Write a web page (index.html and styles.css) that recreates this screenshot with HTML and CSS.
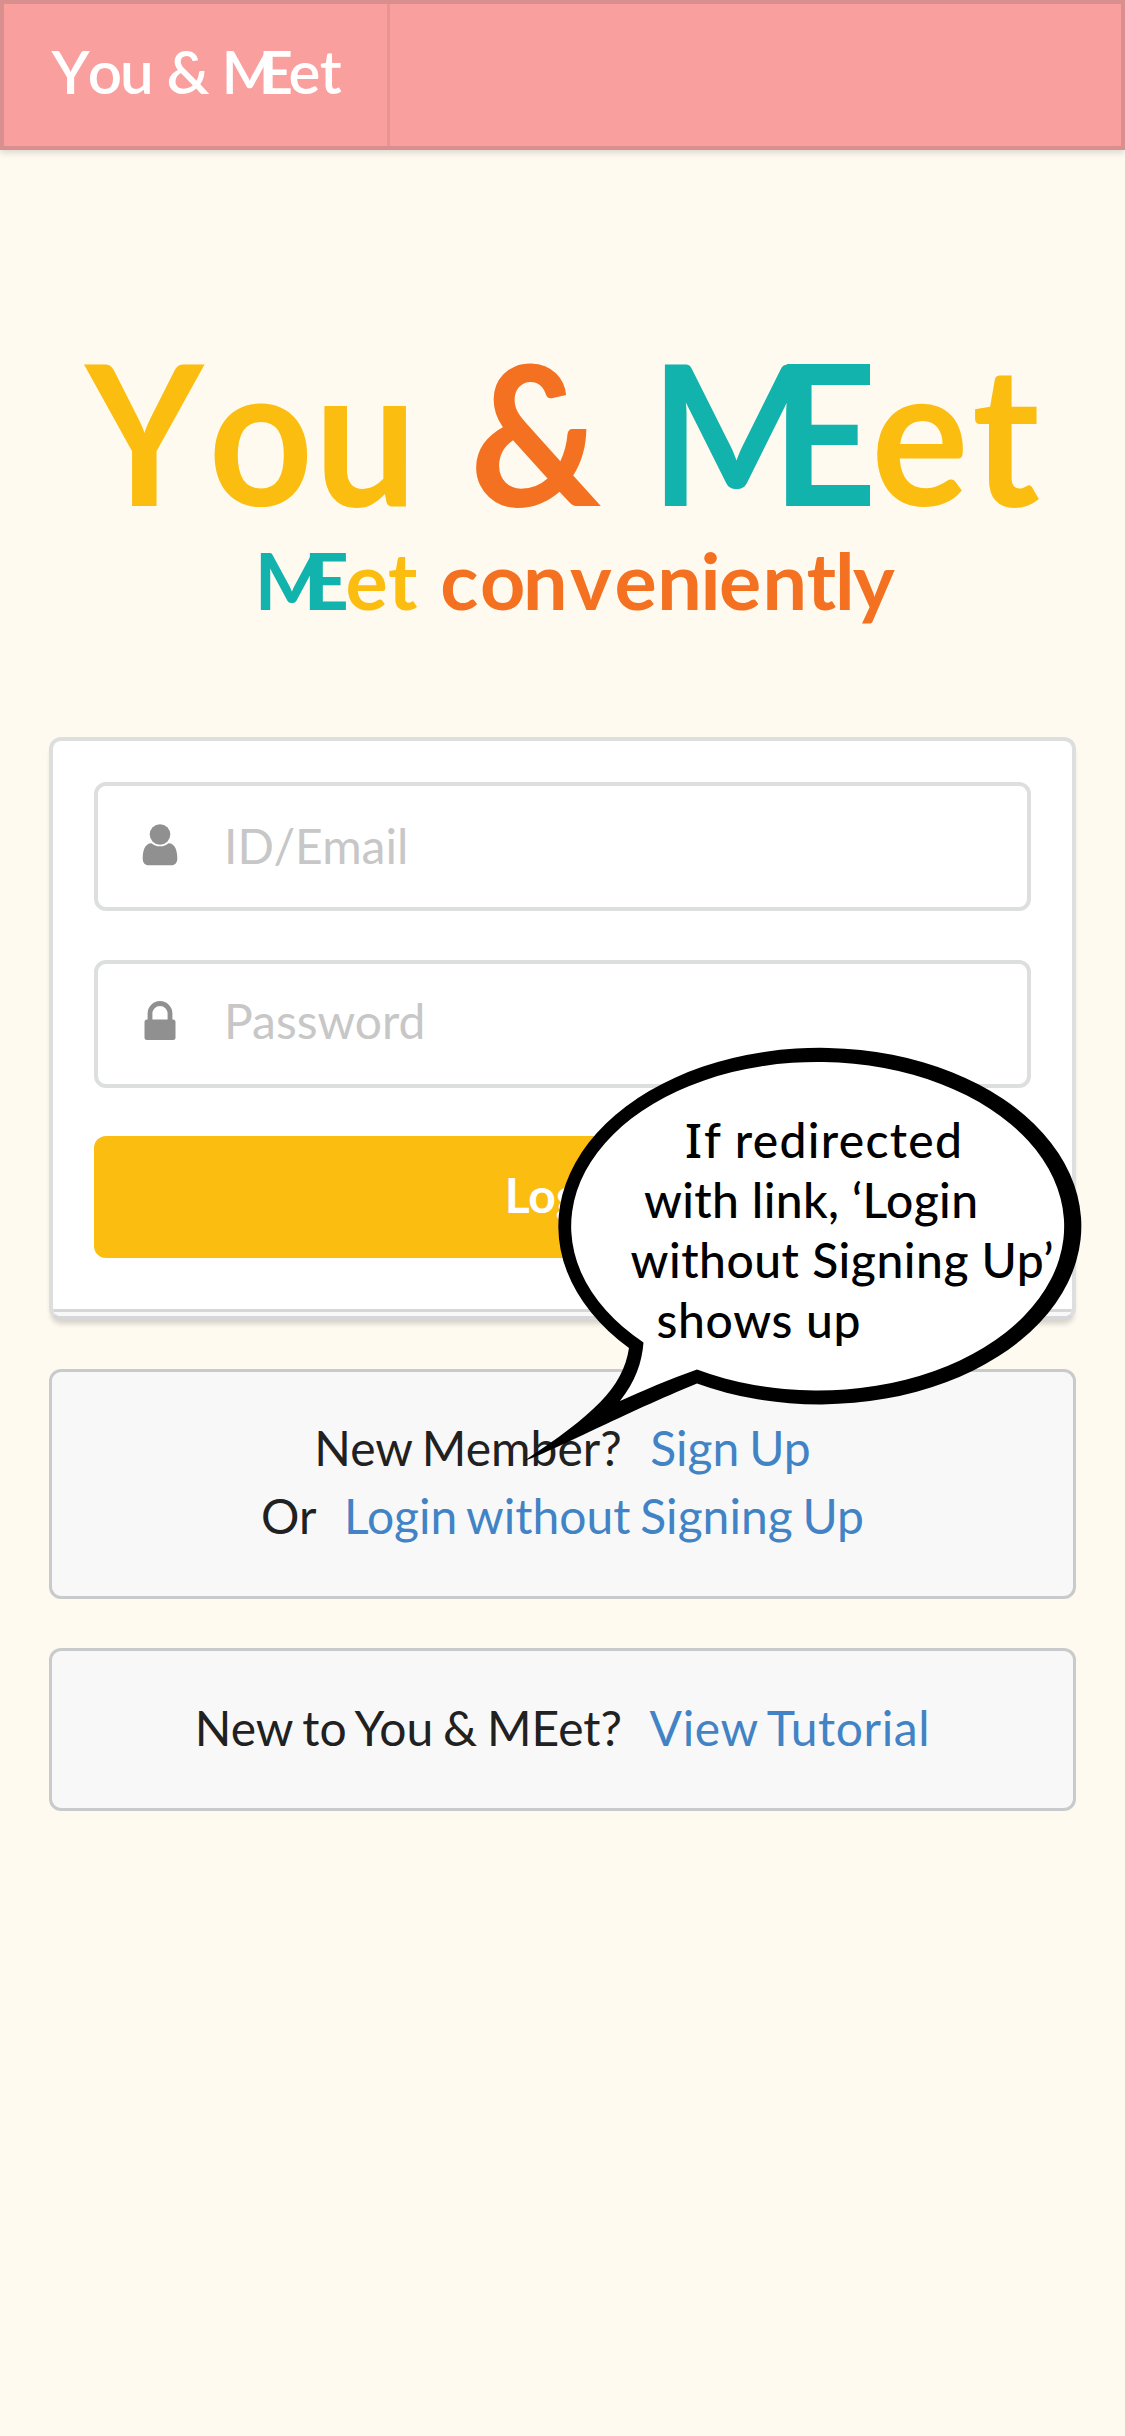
FILE: index.html
```
<!DOCTYPE html>
<html lang="en">
<head>
<meta charset="utf-8">
<title>You &amp; MEet</title>
<link rel="stylesheet" href="styles.css">
</head>
<body>
<header class="menu">
  <a class="menu-brand">
    <svg width="383" height="142" viewBox="4 4 383 142">
      <text class="brand" y="94" x="51.4 87.7 119.9 140 166.5 190 221.5 258.5 288.6 319.7">You &amp; MEet</text>
    </svg>
  </a>
</header>
<main class="page">
  <svg class="logo" width="1125" height="420" viewBox="0 260 1125 420">
    <text class="logo-name" transform="scale(.93 1)" y="506" x="91.8 224.1 338 440 504.9 640 699.2 830.4 936.8 1045.1"><tspan class="yellow">You </tspan><tspan class="orange">&amp; </tspan><tspan class="teal">ME</tspan><tspan class="yellow">et</tspan></text>
    <text class="logo-tag" y="610" x="254.5 303.5 345.4 388 425 440.2 480 523 570 614.5 657.3 700.4 719 762.5 806.7 835 853"><tspan class="teal">ME</tspan><tspan class="yellow">et </tspan><tspan class="orange">conveniently</tspan></text>
  </svg>

  <form class="card">
    <label class="field">
      <svg class="icon" width="36" height="42" viewBox="0 0 36 42"><circle cx="18" cy="10.500" r="10.300"/><path d="M9.500 19.200C2.500 19.200.7 27.500.7 34.500.7 38.600 3 41.300 6.500 41.300H29.500C33 41.300 35.300 38.600 35.300 34.500 35.300 27.500 33.500 19.200 26.500 19.200 24.500 21.200 21.500 22.300 18 22.300S11.500 21.200 9.500 19.200Z"/></svg>
      <input type="text" placeholder="ID/Email">
    </label>
    <label class="field field-password">
      <svg class="icon" width="36" height="42" viewBox="0 0 36 42"><path d="M8 21V13.500a10 10 0 0 1 20 0V21" fill="none" class="shackle"/><rect x="2.500" y="19.500" width="31" height="20.500" rx="2.500"/></svg>
      <input type="password" placeholder="Password">
    </label>
    <button class="submit" type="button">Login</button>
    <div class="card-foot"></div>
  </form>

  <section class="message message-join">
    <p>New Member? &nbsp;<a>Sign Up</a></p>
    <p>Or &nbsp;<a>Login without Signing Up</a></p>
  </section>
  <section class="message message-tutorial">
    <p>New to You &amp; MEet? &nbsp;<a>View Tutorial</a></p>
  </section>

  <svg class="bubble" width="570" height="430" viewBox="520 1040 570 430">
    <path d="M522 1460C549 1451 625 1411 695 1382.500A261.500 178.300 0 1 0 627 1347C621 1387 591 1414 522 1460Z"/>
    <path class="bubble-fill" d="M618 1400C633 1381 640 1362 641.500 1341.500A246.500 164.300 0 1 1 695 1368.500C668 1378 640 1390 618 1400Z"/>
    <g class="bubble-text">
      <text class="serif-i" x="683" y="1156.500">I</text>
      <text x="702" y="1156.500" textLength="258">f redirected</text>
      <text x="642" y="1216.500" textLength="334">with link, ‘Login</text>
      <text x="628.500" y="1276.500" textLength="423">without Signing Up’</text>
      <text x="654.500" y="1336.500" textLength="204">shows up</text>
    </g>
  </svg>
</main>
</body>
</html>
```
FILE: styles.css
```
* { box-sizing: border-box; }

body {
  margin: 0;
  min-height: 2436px;
  background: #fffaef;
  color: #212121;
  font-family: Lato, sans-serif;
  font-size: 48px;
}

.menu {
  display: flex;
  height: 150px;
  border: 4px solid #d98f8e;
  background: #f99f9d;
  box-shadow: 0 3px 6px rgba(34, 36, 38, .15);
}
.menu-brand {
  display: flex;
  border-right: 3px solid #e79594;
  width: 386px;
}
.menu-brand svg, .logo { display: block; flex: none; }
.brand { font-size: 60px; font-weight: 600; fill: #fff; }

.page { padding-top: 110px; }
.logo-name { font-size: 196px; font-weight: 700; }
.logo-tag { font-size: 79px; font-weight: 700; }
.yellow { fill: #fbbd10; }
.orange { fill: #f37121; }
.teal { fill: #12b3ad; }

.card {
  width: 1027px;
  height: 583px;
  margin: 57px auto 0 49px;
  display: flex;
  flex-direction: column;
  border: 4px solid #dddfde;
  border-bottom-color: #d6d7d8;
  border-radius: 12px;
  padding: 41px 41px 0;
  background: #fff;
  box-shadow: 0 6px 5px -2px rgba(34, 36, 38, .18);
}
.field {
  display: flex;
  align-items: center;
  height: 129px;
  border: 4px solid #dddfde;
  border-radius: 12px;
  padding: 0 0 3px 44px;
}
.field-password { height: 128px; margin-top: 49px; padding-bottom: 7px; }
.icon { flex: none; fill: #909090; }
.shackle { stroke: #909090; stroke-width: 4.800px; }
.field input {
  flex: 1;
  min-width: 0;
  height: 100%;
  margin-left: 46px;
  border: 0;
  padding: 0;
  outline: 0;
  background: transparent;
  font: 48px Lato, sans-serif;
}
.field input::placeholder { color: #c7c7c7; opacity: 1; }
.submit {
  flex: none;
  height: 122px;
  margin-top: 48px;
  border: 0;
  border-radius: 12px;
  padding: 0 0 5px;
  background: #fbbd10;
  color: #fff;
  font: 700 48px Lato, sans-serif;
}
.card-foot {
  height: 7px;
  margin: auto -41px 0;
  border-top: 3px solid #d6d7d8;
  border-radius: 0 0 8px 8px;
  background: #f8f8f9;
}

.message {
  width: 1027px;
  margin-left: 49px;
  border: 3px solid #c9cacb;
  border-radius: 12px;
  background: #f8f8f9;
  text-align: center;
  line-height: 68px;
  word-spacing: -2.5px;
}
.message p { margin: 0; }
.message a { margin-left: 9px; color: #4183c4; }
.message-join { height: 230px; margin-top: 49px; padding-top: 42px; }
.message-tutorial { height: 163px; margin-top: 49px; padding-top: 43px; }
.message-tutorial a { margin-left: 8px; letter-spacing: .6px; }

.bubble { position: absolute; left: 522px; top: 1041px; }
.bubble-fill { fill: #fff; }
.bubble-text { font-size: 48px; font-weight: 500; fill: #000; }
.serif-i { font-family: "Noto Sans", sans-serif; }
```
